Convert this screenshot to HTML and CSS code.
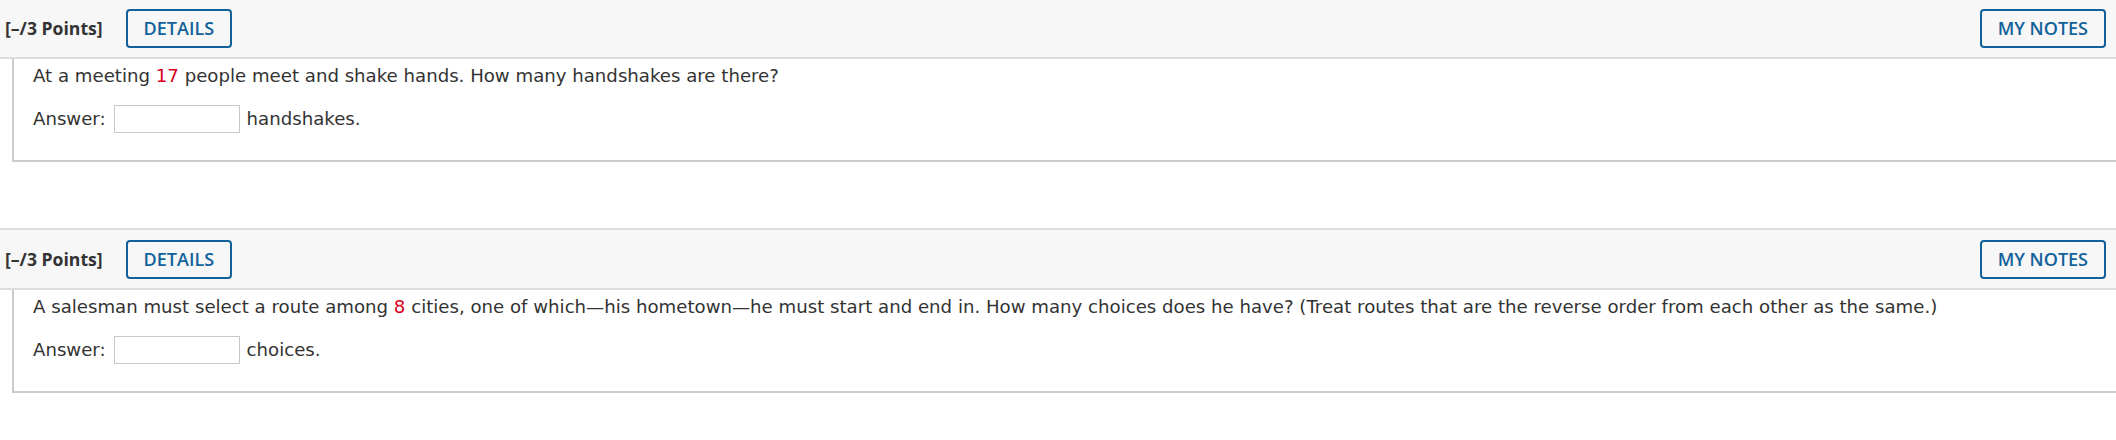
FILE: index.html
```html
<!DOCTYPE html>
<html lang="en">
<head>
    <meta charset="UTF-8">
    <meta name="viewport" content="width=device-width, initial-scale=1.0">
    <title>Assignment</title>
    <link rel="stylesheet" href="styles.css">
</head>
<body>
    <div class="questions">
        <div class="question">
            <div class="q-header">
                <span class="points">[&ndash;/3 Points]</span>
                <button class="btn">DETAILS</button>
                <button class="btn notes">MY NOTES</button>
            </div>
            <div class="q-body">
                <p class="prompt">At a meeting <span class="num">17</span> people meet and shake hands. How many handshakes are there?</p>
                <p class="answer">Answer: <input type="text" class="answer-box"> handshakes.</p>
            </div>
        </div>

        <div class="question">
            <div class="q-header">
                <span class="points">[&ndash;/3 Points]</span>
                <button class="btn">DETAILS</button>
                <button class="btn notes">MY NOTES</button>
            </div>
            <div class="q-body">
                <p class="prompt">A salesman must select a route among <span class="num">8</span> cities, one of which&mdash;his hometown&mdash;he must start and end in. How many choices does he have? (Treat routes that are the reverse order from each other as the same.)</p>
                <p class="answer">Answer: <input type="text" class="answer-box"> choices.</p>
            </div>
        </div>
    </div>
</body>
</html>
```

FILE: styles.css
```css
/* Question list */
body {
    margin: 0;
    padding: 0;
    background: #fff;
    color: #333;
    font-family: 'DejaVu Sans', Verdana, sans-serif;
    overflow: hidden;
}

.questions {
    margin-top: -3px;
}

.question + .question {
    margin-top: 66px;
}

.q-header {
    display: flex;
    align-items: center;
    height: 58px;
    padding: 0 10px 0 5px;
    background: #f7f7f7;
    border-top: 2px solid #dcdcdc;
    border-bottom: 2px solid #dcdcdc;
}

.points {
    font-family: 'Open Sans', sans-serif;
    font-weight: 700;
    font-size: 17.6px;
    color: #333;
    margin-right: 23px;
}

.btn {
    height: 39px;
    padding: 0 16px;
    background: transparent;
    border: 2px solid #11629a;
    border-radius: 4px;
    color: #11629a;
    font-family: 'Open Sans', sans-serif;
    font-weight: 600;
    font-size: 18px;
    cursor: pointer;
}

.notes {
    margin-left: auto;
}

.q-body {
    margin-left: 12px;
    height: 96px;
    padding: 5px 19px 0;
    border-left: 2px solid #ccc;
    border-bottom: 2px solid #ccc;
    font-size: 18.15px;
    line-height: 24px;
}

.prompt {
    margin: 0;
}

.num {
    color: #d9001b;
}

.answer {
    margin: 17px 0 0;
    display: flex;
    align-items: center;
}

.answer-box {
    width: 124px;
    height: 26px;
    margin: 0 7px 0 8px;
    padding: 0;
    border: 1px solid #c8c8c8;
    border-radius: 0;
}
```
